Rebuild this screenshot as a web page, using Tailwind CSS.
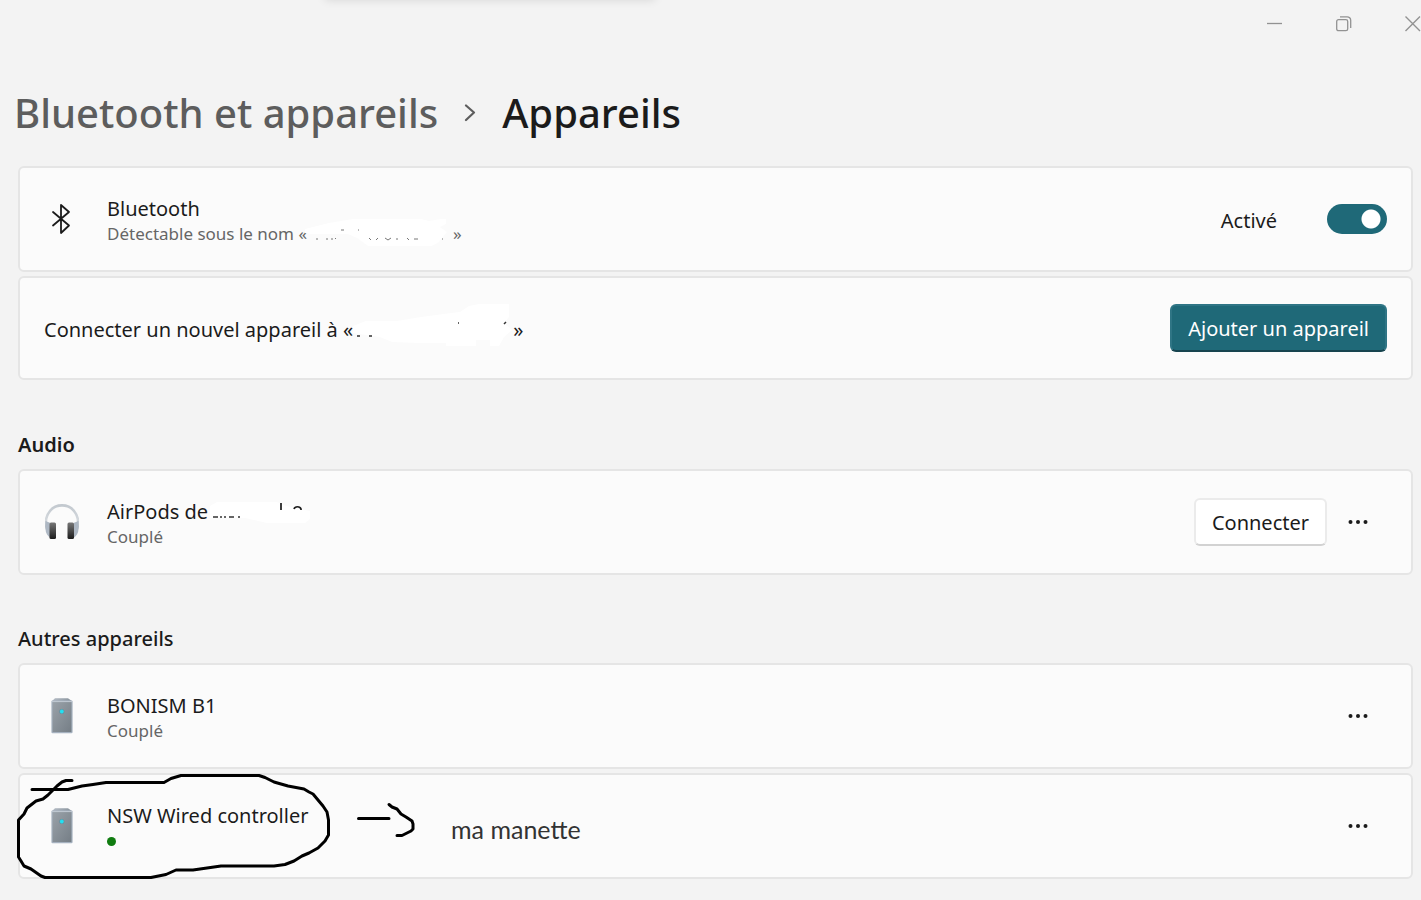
<!DOCTYPE html>
<html lang="fr">
<head>
<meta charset="utf-8">
<meta name="viewport" content="width=device-width, initial-scale=1">
<title>Bluetooth et appareils - Appareils</title>
<script src="https://cdn.jsdelivr.net/npm/@tailwindcss/browser@4"></script>
</head>
<body class="relative min-h-screen overflow-x-hidden bg-[#f3f3f3] font-['Segoe_UI','Noto_Sans',sans-serif] text-xl text-[#1b1b1b]">
<svg class="absolute h-0 w-0" aria-hidden="true">
  <defs>
    <linearGradient id="tower" x1="0" y1="0" x2="1" y2="1"><stop offset="0" stop-color="#9ba3aa"/><stop offset="1" stop-color="#747d85"/></linearGradient>
    <linearGradient id="lid" x1="0" y1="0" x2="1" y2="0"><stop offset="0" stop-color="#b5bdc6"/><stop offset="1" stop-color="#87919b"/></linearGradient>
    <linearGradient id="band" x1="0" y1="0" x2="0" y2="1"><stop offset="0" stop-color="#c3c9cf"/><stop offset="0.5" stop-color="#d3d8dd"/><stop offset="1" stop-color="#9aa2ab"/></linearGradient>
    <linearGradient id="pad" x1="0" y1="0" x2="0" y2="1"><stop offset="0" stop-color="#777"/><stop offset="1" stop-color="#1c1c1c"/></linearGradient>
    <symbol id="device" viewBox="0 0 22 36">
      <path d="M.5 3.500 4 .3h13l4.500 3.200z" fill="url(#lid)"/>
      <rect x="1" y="3.200" width="20" height="31.500" rx=".6" fill="url(#tower)" stroke="#a5b1bf" stroke-width="1.200"/>
      <path d="M1 3.600h20" stroke="#c0c9d2"/>
      <circle cx="10.800" cy="13.500" r="2.600" fill="#668f9f"/><circle cx="10.800" cy="13.500" r="1.900" fill="#22e1f2"/>
    </symbol>
    <symbol id="dots" viewBox="0 0 20 6"><circle cx="2.500" cy="3" r="2"/><circle cx="10" cy="3" r="2"/><circle cx="17.500" cy="3" r="2"/></symbol>
  </defs>
</svg>
<div class="absolute -top-4 left-[325px] h-4 w-[330px] shadow-[0_0_10px_rgba(0,0,0,0.12)]"></div>

<header class="flex h-12 items-center justify-end overflow-hidden text-[#929292]">
  <div class="-mr-[13px] flex">
    <button type="button" aria-label="Réduire" class="flex h-12 w-[69px] items-center justify-center"><svg class="size-4" viewBox="0 0 16 16" stroke="currentColor" stroke-width="1.300"><path d="M0 7.500h15"/></svg></button>
    <button type="button" aria-label="Niveau inférieur" class="flex h-12 w-[69px] items-center justify-center"><svg class="size-4" viewBox="0 0 16 16" fill="none" stroke="currentColor" stroke-width="1.300"><rect x=".7" y="3.700" width="11" height="11" rx="1.800"/><path d="M4 .8h7.200a3.500 3.500 0 0 1 3.500 3.500V12"/></svg></button>
    <button type="button" aria-label="Fermer" class="mr-[-13px] flex h-12 w-[69px] items-center justify-center"><svg class="size-4" viewBox="0 0 16 16" stroke="currentColor" stroke-width="1.400"><path d="m.5.500 14.500 14.500M15 .5.500 15"/></svg></button>
  </div>
</header>

<main class="pr-2 pb-5 pl-[18px]">
  <nav aria-label="Fil d’Ariane" class="-ml-1 flex h-[118px] items-center pt-3 text-[40px] font-medium">
    <a href="#" class="text-[#5d5d5d]">Bluetooth et appareils</a>
    <svg class="mx-[26px] h-[18px] w-3 text-[#5d5d5d]" viewBox="0 0 12 18" fill="none" stroke="currentColor" stroke-width="2.200" stroke-linecap="round" stroke-linejoin="round"><path d="m2 1.500 8 7-8 7.500"/></svg>
    <h1>Appareils</h1>
  </nav>

  <div class="flex flex-col gap-1">
    <section class="flex min-h-[106px] items-center rounded-md border-2 border-[#e5e5e5] bg-[#fbfbfb] px-6">
      <svg class="mr-[29px] h-8 w-[34px]" viewBox="0 0 34 32" fill="none" stroke="#1b1b1b" stroke-width="1.800" stroke-linejoin="round" stroke-linecap="round"><path d="m9 9 16 13.500L17 30V2l8 7L9 22.500"/></svg>
      <div class="flex-1 pt-0.5">
        <h2 class="leading-7">Bluetooth</h2>
        <p class="flex text-[17px] leading-[22px] text-[#666]">Détectable sous le nom «
          <span class="relative w-[146px]">
            <svg class="absolute -top-[7px] -left-1 h-9 w-[150px]" viewBox="0 0 150 36" fill="none">
              <path d="M2 13 26 7l24-4h68l8 2 12-2h5v5l-6 3 7 5-8 10-7 4H65L54 22 45 18H8l-6-1z" fill="#fff"/>
              <path d="M14 22v2M24 22v2M29 22v2M32 23l1-1M38 14h3M55 14h1M66 22l2 2M73 24l2-2M82 22l3 2 3-2M94 22v2M104 22l2 2M111 23h4M139 23h1" stroke="#777"/>
            </svg>
          </span>»</p>
      </div>
      <label for="bt" class="mr-[50px] pt-[3px]">Activé</label>
      <input id="bt" type="checkbox" role="switch" checked class="h-[30px] w-[60px] appearance-none rounded-full bg-[#1f6978] bg-[radial-gradient(circle_at_44px_15px,#fff_8px,#fff_9px,transparent_10px)]">
    </section>
    <section class="flex min-h-[104px] items-center justify-between rounded-md border-2 border-[#e5e5e5] bg-[#fbfbfb] px-6">
      <p class="flex pt-[3px]">Connecter un nouvel appareil à «
        <span class="relative w-40">
          <svg class="absolute -top-3 -left-1 h-12 w-[164px]" viewBox="0 0 164 48" fill="none">
            <path d="M4 22 17 17H48l24-4 30-4 9-1 9-6 10-2h30v13l-5 6 8 7-8 7-5 9h-9v-6h-14v6H97V39H70L43 38 31 33 4 29z" fill="#fff"/>
            <path d="M8 32h3M20 32h3M109 19h1M155 20l2-2" stroke="#333" stroke-width="1.500"/>
          </svg>
        </span>»</p>
      <button type="button" class="h-12 rounded-md border-2 border-[#2f7585] border-b-[#17444f] bg-[#1f6978] px-4 pt-0.5 text-white">Ajouter un appareil</button>
    </section>
  </div>

  <h2 class="mt-[50px] leading-[30px] font-semibold">Audio</h2>
  <section class="mt-[9px] flex min-h-[106px] items-center rounded-md border-2 border-[#e5e5e5] bg-[#fbfbfb] px-6">
    <svg class="mr-7 ml-px h-9 w-[34px]" viewBox="0 0 34 36" fill="none">
      <path d="M5 31C-1 22 0 13 5 7 11-.5 23-.5 29 7c5 6 6 15 0 24" stroke="url(#band)" stroke-width="2.600"/>
      <path d="M.5 17v8c0 4 2 7 5 9V19zM33.500 17v8c0 4-2 7-5 9V19z" fill="#aeb8c4"/>
      <rect x="4.500" y="18.500" width="6.500" height="16.500" rx="1.500" fill="url(#pad)"/><rect x="22.500" y="18.500" width="6.500" height="16.500" rx="1.500" fill="url(#pad)"/>
    </svg>
    <div class="flex-1 pt-0.5">
      <h3 class="flex leading-7">AirPods de
        <span class="relative w-[104px]">
          <svg class="absolute top-0 left-0 h-7 w-[104px]" viewBox="0 0 104 28" fill="none">
            <path d="M2 8 9 4h60l9 4 24 5v8l-5 4H59L37 20H2z" fill="#fff"/>
            <path d="M5 19h5M13 18v2M17 18v2M21 19h5M31 18v2" stroke="#333" stroke-width="1.500"/>
            <path d="M73 5v7M86 11c1-3 6-3 7 0v1" stroke="#1b1b1b" stroke-width="1.700"/>
          </svg>
        </span></h3>
      <p class="text-[17px] leading-[22px] text-[#666]">Couplé</p>
    </div>
    <button type="button" class="h-12 rounded-md border-2 border-[#ebebeb] border-b-[#d2d2d2] bg-white px-4 pt-0.5">Connecter</button>
    <button type="button" aria-label="Plus d’options" class="ml-0.5 flex h-12 w-[58px] items-center justify-center"><svg class="h-[6px] w-5" fill="currentColor"><use href="#dots"/></svg></button>
  </section>

  <h2 class="mt-[49px] leading-[30px] font-medium">Autres appareils</h2>
  <div class="mt-[9px] flex flex-col gap-1">
    <section class="flex min-h-[106px] items-center rounded-md border-2 border-[#e5e5e5] bg-[#fbfbfb] px-6">
      <svg class="mr-[34px] ml-[7px] h-9 w-[22px]"><use href="#device"/></svg>
      <div class="flex-1 pt-0.5">
        <h3 class="leading-7">BONISM B1</h3>
        <p class="text-[17px] leading-[22px] text-[#666]">Couplé</p>
      </div>
      <button type="button" aria-label="Plus d’options" class="flex h-12 w-[58px] items-center justify-center"><svg class="h-[6px] w-5" fill="currentColor"><use href="#dots"/></svg></button>
    </section>
    <section class="relative flex min-h-[106px] items-center rounded-md border-2 border-[#e5e5e5] bg-[#fbfbfb] px-6">
      <svg class="mr-[34px] ml-[7px] h-9 w-[22px]"><use href="#device"/></svg>
      <div class="flex-1 pt-0.5">
        <h3 class="leading-7">NSW Wired controller</h3>
        <p class="flex h-[22px] items-center"><span class="size-[9px] rounded-full bg-[#107c10]"></span></p>
      </div>
      <button type="button" aria-label="Plus d’options" class="flex h-12 w-[58px] items-center justify-center"><svg class="h-[6px] w-5" fill="currentColor"><use href="#dots"/></svg></button>
      <!-- Hand-drawn note -->
      <svg class="pointer-events-none absolute -top-[15px] -left-5 h-[130px] w-[420px]" viewBox="0 0 420 130" fill="none" stroke="#000" stroke-width="3" stroke-linecap="round" stroke-linejoin="round" aria-hidden="true">
        <path d="M32 29.500H68L82 26 93 24.500 106 22.500H164L171 18.500 181 15.500H259L265 17.500 274 22 288 26 304 29 309 32 313 34 318 40 323 46 327 52 328.500 60V75L325 81 318 88 309 93 302 96 294 101 285 104.500 274 106H221L193 110H176L166 114.500 151 117.500H45L41 116 31 109 24 106 21 101 18.500 97V60L24 54 27 48 36 41 43 39 48 35 57 26 62 22 66 20.500H72"/>
        <path d="M358.500 58.500H389M389 44.500 392 47 397 49 401 54 406 57 412 61 413 64V69L411 71 407 73 402 75.500H397"/>
      </svg>
      <p class="absolute top-[36px] left-[431px] font-['Lato',sans-serif] text-[25px] leading-9 text-[#333]">ma manette</p>
    </section>
  </div>
</main>
</body>
</html>
